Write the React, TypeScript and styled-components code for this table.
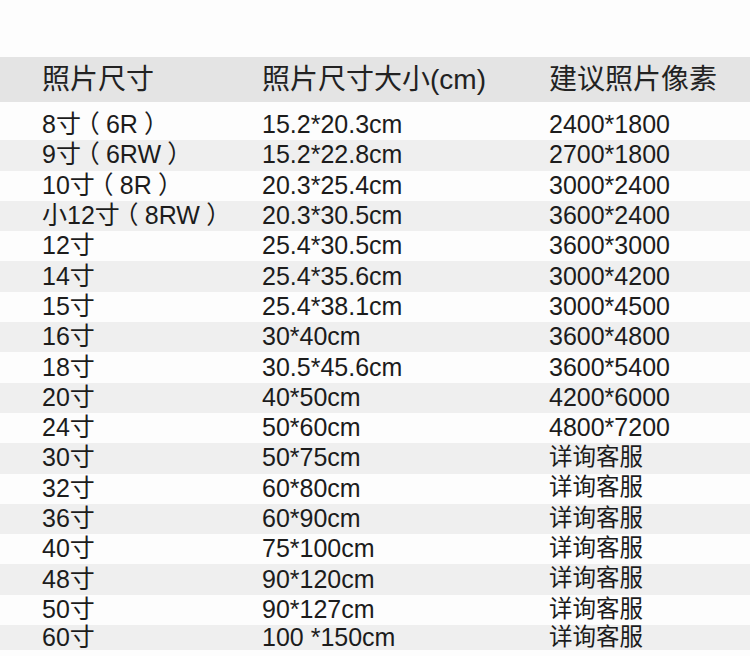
import React from "react";
import styled, { createGlobalStyle } from "styled-components";

const GlobalStyle = createGlobalStyle`
  html, body {
    margin: 0;
    padding: 0;
    background: #fdfdfd;
    overflow: hidden;
  }
  body {
    font-family: "Liberation Sans", "Noto Sans CJK SC", sans-serif;
    color: #1c1c1c;
  }
`;

const Page = styled.div`
  width: 750px;
  height: 656px;
  padding-top: 57px;
  box-sizing: border-box;
  display: flex;
  flex-direction: column;
  background: #fdfdfd;
`;

const HeaderRow = styled.div`
  display: grid;
  grid-template-columns: 220px 287px 1fr;
  align-items: center;
  height: 45px;
  padding-left: 42px;
  background: #e4e4e4;
  margin-bottom: 8px;
`;

const HeaderCell = styled.div`
  font-size: 28px;
  line-height: 1;
  color: #222;
  white-space: nowrap;
`;

const Body = styled.div`
  display: flex;
  flex-direction: column;
`;

const Row = styled.div<{ $shaded: boolean; $last?: boolean }>`
  display: grid;
  grid-template-columns: 220px 287px 1fr;
  align-items: center;
  height: ${(p) => (p.$last ? "25px" : "30.3px")};
  padding-left: 42px;
  background: ${(p) => (p.$shaded ? "#efefef" : "transparent")};
`;

const Cell = styled.div<{ $cjk?: boolean }>`
  font-size: ${(p) => (p.$cjk ? "23.5px" : "25px")};
  line-height: 1;
  white-space: nowrap;
  color: #1c1c1c;
  padding-bottom: 1px;
`;

const Paren = styled.span`
  display: inline-block;
  width: 1em;
  text-align: center;
  font-feature-settings: "halt" 1;
`;

const rows: [string, string, string][] = [
  ["8寸（6R）", "15.2*20.3cm", "2400*1800"],
  ["9寸（6RW）", "15.2*22.8cm", "2700*1800"],
  ["10寸（8R）", "20.3*25.4cm", "3000*2400"],
  ["小12寸（8RW）", "20.3*30.5cm", "3600*2400"],
  ["12寸", "25.4*30.5cm", "3600*3000"],
  ["14寸", "25.4*35.6cm", "3000*4200"],
  ["15寸", "25.4*38.1cm", "3000*4500"],
  ["16寸", "30*40cm", "3600*4800"],
  ["18寸", "30.5*45.6cm", "3600*5400"],
  ["20寸", "40*50cm", "4200*6000"],
  ["24寸", "50*60cm", "4800*7200"],
  ["30寸", "50*75cm", "详询客服"],
  ["32寸", "60*80cm", "详询客服"],
  ["36寸", "60*90cm", "详询客服"],
  ["40寸", "75*100cm", "详询客服"],
  ["48寸", "90*120cm", "详询客服"],
  ["50寸", "90*127cm", "详询客服"],
  ["60寸", "100 *150cm", "详询客服"],
];

function SizeLabel({ text }: { text: string }) {
  const parts = text.split(/([（）])/).filter((s) => s.length > 0);
  return (
    <>
      {parts.map((p, i) =>
        p === "（" || p === "）" ? <Paren key={i}>{p}</Paren> : <React.Fragment key={i}>{p}</React.Fragment>
      )}
    </>
  );
}

export default function App() {
  return (
    <>
      <GlobalStyle />
      <Page>
        <HeaderRow>
          <HeaderCell>照片尺寸</HeaderCell>
          <HeaderCell>照片尺寸大小(cm)</HeaderCell>
          <HeaderCell>建议照片像素</HeaderCell>
        </HeaderRow>
        <Body>
          {rows.map((r, i) => (
            <Row key={i} $shaded={i % 2 === 1} $last={i === rows.length - 1}>
              <Cell>
                <SizeLabel text={r[0]} />
              </Cell>
              <Cell>{r[1]}</Cell>
              <Cell $cjk={r[2] === "详询客服"}>{r[2]}</Cell>
            </Row>
          ))}
        </Body>
      </Page>
    </>
  );
}
